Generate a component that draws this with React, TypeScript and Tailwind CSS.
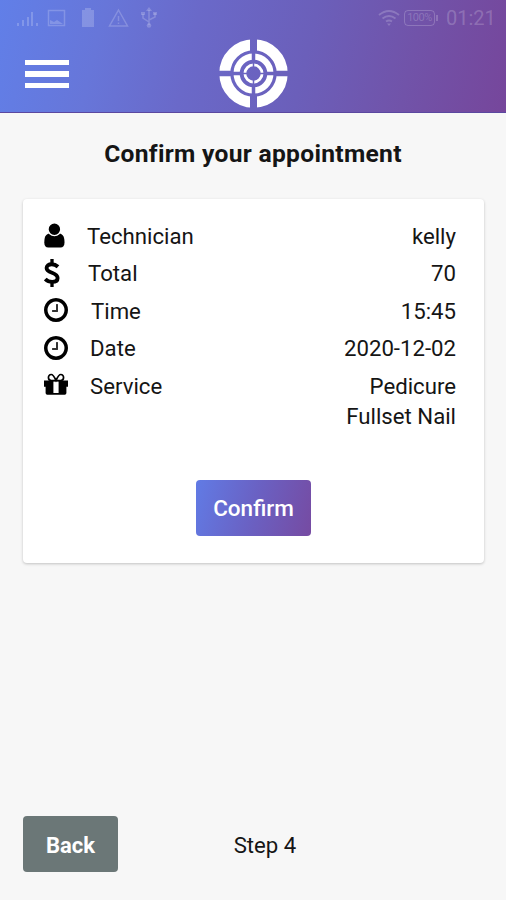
import type { ReactNode } from 'react';

function StatusBar() {
  return (
    <div className="flex h-9 items-center justify-between pr-[11px] pl-[15px] text-white/20">
      <div className="flex items-center">
        <svg width="24" height="20" viewBox="0 0 24 20" fill="currentColor">
          <path d="M2 15h2v3H2zM7 12h2v6H7zM12 9h2v9h-2zM16 4h2v14h-2zM21 15h2v3h-2z" />
        </svg>
        <svg className="ml-2" width="19" height="20" viewBox="0 0 19 20" fill="none" stroke="currentColor" strokeWidth="1.5">
          <path d="M1.5 2.5h16v15h-16z" />
          <path d="M3 16v-4l4 2 3-2 6 4z" fill="currentColor" stroke="none" />
        </svg>
        <svg className="ml-[15px]" width="14" height="20" viewBox="0 0 14 20" fill="currentColor">
          <path d="M4 0h6v2h3v17H1V2h3z" />
        </svg>
        <svg className="ml-[13px]" width="21" height="20" viewBox="0 0 21 20" fill="none" stroke="currentColor" strokeWidth="1.5">
          <path d="M10.5 2 19.5 18h-18zM10.5 8v5M10.5 14.5v1.5" />
        </svg>
        <svg className="ml-[11px]" width="18" height="22" viewBox="0 0 18 22" fill="none" stroke="currentColor" strokeWidth="1.5">
          <path d="M9 3v15M9 15l-6-4V7M9 13l6-3V6" />
          <path d="m9 0 3 4H6zM1 5h4v3H1zM13 5h4v3h-4z" fill="currentColor" stroke="none" />
          <circle cx="9" cy="18.5" r="2.3" fill="currentColor" stroke="none" />
        </svg>
      </div>
      <div className="flex items-center">
        <svg width="22" height="18" viewBox="0 0 22 18" fill="none" stroke="currentColor" strokeWidth="2">
          <path d="M1 6q10-8 20 0M4.500 9.500q6.500-5 13 0M8 12.500q3-2 6 0" />
          <path d="m9 14.500 2 2.500 2-2.500z" fill="currentColor" stroke="none" />
        </svg>
        <div className="ml-1 flex h-4 w-[31px] items-center justify-center rounded border border-white/20 text-[11px] tracking-[-0.5px]">
          100%
        </div>
        <div className="ml-[1px] h-1.5 w-[2px] bg-white/20" />
        <div className="ml-[8px] w-[49px] text-[20px] leading-none whitespace-nowrap">01:21</div>
      </div>
    </div>
  );
}

function Logo() {
  return (
    <svg width="70" height="70" viewBox="-35.5 -35.5 70 70" fill="none" stroke="white">
      <defs>
        <mask id="outer" maskUnits="userSpaceOnUse" x="-35" y="-35" width="70" height="70">
          <path d="M-35-35h70v70h-70z" fill="white" stroke="none" />
          <path d="M0-35V35" stroke="black" strokeWidth="7" />
          <path d="M-35 0H35" stroke="black" strokeWidth="5.500" />
        </mask>
        <mask id="middle" maskUnits="userSpaceOnUse" x="-35" y="-35" width="70" height="70">
          <path d="M-35-35h70v70h-70z" fill="white" stroke="none" />
          <path d="M0-35V35M-35 0H35" stroke="black" strokeWidth="3.500" />
        </mask>
        <mask id="inner" maskUnits="userSpaceOnUse" x="-35" y="-35" width="70" height="70">
          <path d="M-35-35h70v70h-70z" fill="white" stroke="none" />
          <path d="M0-35V35M-35 0H35" stroke="black" strokeWidth="1.500" />
        </mask>
      </defs>
      <circle r="28.700" strokeWidth="11" mask="url(#outer)" />
      <circle r="16.900" strokeWidth="6.200" mask="url(#middle)" />
      <circle r="8.600" strokeWidth="2.800" mask="url(#inner)" />
    </svg>
  );
}

function UserIcon() {
  return (
    <svg width="21" height="25" viewBox="0 0 21 25" fill="black">
      <path d="M5.500 10.500C1.500 11 .3 14.500.3 19.500c0 3.500 1.400 5 4 5h12.200c2.600 0 4-1.500 4-5 0-5-1.200-8.500-5.200-9z" />
      <circle cx="10.400" cy="6.200" r="6.400" stroke="white" strokeWidth="1.400" />
    </svg>
  );
}

function DollarIcon() {
  return (
    <svg width="16" height="28" viewBox="0 0 16 28" fill="none" stroke="black">
      <path d="M8 0v5M8 23v5" strokeWidth="3.300" />
      <path d="M14 7.800C12 6 10 5.200 7.700 5.200 4.500 5.200 2.600 6.700 2.600 9c0 2.700 2.500 3.700 5.400 4.800 3 1.100 5.600 2.300 5.600 5.200 0 2.500-2.100 3.900-5.400 3.900-2.700 0-5.200-1-7-2.900" strokeWidth="3.900" />
    </svg>
  );
}

function ClockIcon() {
  return (
    <svg width="24" height="24" viewBox="0 128 1536 1536" fill="black">
      <path d="M896 544v448q0 14-9 23t-23 9h-320q-14 0-23-9t-9-23v-64q0-14 9-23t23-9h224v-352q0-14 9-23t23-9h64q14 0 23 9t9 23z" fillOpacity="0.8" />
      <path d="M1312 896q0-148-73-273t-198-198-273-73-273 73-198 198-73 273 73 273 198 198 273 73 273-73 198-198 73-273zm224 0q0 209-103 385.500t-279.500 279.500-385.500 103-385.500-103-279.500-279.500-103-385.500 103-385.500 279.500-279.500 385.500-103 385.500 103 279.500 279.500 103 385.500z" />
    </svg>
  );
}

function GiftIcon() {
  return (
    <svg className="-mt-[3px]" width="24" height="22" viewBox="0 0 24 22">
      <path d="M0 7.500h24v6.300h-1.600V20q0 1.700-1.700 1.700H3.300Q1.600 21.700 1.600 20v-6.200H0z" fill="black" />
      <path d="M9.400 8.500h5.200v11.500H9.400z" fill="white" />
      <path d="M11.800 7.500H7.300C3.500 7.500 3.500 1.500 7.200 1.500c2.300 0 3.300 2.700 4.800 6 1.500-3.300 2.500-6 4.800-6 3.700 0 3.700 6-.1 6z" fill="white" stroke="black" strokeWidth="1.700" />
    </svg>
  );
}

type RowProps = { icon: ReactNode; label: string; offset: string; values: string[] };

function Row({ icon, label, offset, values }: RowProps) {
  return (
    <div className="flex items-start text-[22.200px] leading-[30.500px]">
      <div className="flex h-[29px] w-6 items-center">{icon}</div>
      <div className={offset}>{label}</div>
      <div className="ml-auto text-right">
        {values.map((value) => (
          <div key={value}>{value}</div>
        ))}
      </div>
    </div>
  );
}

export default function App() {
  return (
    <div className="flex h-[900px] w-[506px] flex-col bg-[#f7f7f7] font-['Roboto',sans-serif] text-[#151515]">
      <header className="h-[113px] border-b border-[#5b48a0] bg-[linear-gradient(103deg,#617fe8_0%,#6776d9_20%,#6a69c9_38%,#6b5fba_60%,#7153a9_80%,#76469b_100%)]">
        <StatusBar />
        <div className="grid grid-cols-[1fr_70px_1fr] items-center pt-[2px]">
          <button className="mt-[2px] ml-[25px] flex w-[44px] flex-col gap-[6px]" aria-label="Menu">
            <span className="h-[5.500px] w-full bg-white" />
            <span className="h-[5.500px] w-full bg-white" />
            <span className="h-[5.500px] w-full bg-white" />
          </button>
          <Logo />
        </div>
      </header>

      <h1 className="mt-[26px] text-center text-[24.600px] leading-[30px] font-bold tracking-[0.300px]">Confirm your appointment</h1>

      <section className="mr-[22px] ml-[23px] mt-[30px] flex h-[364px] flex-col rounded-[4px] bg-white pt-[21.700px] pr-7 pl-[21px] shadow-[0_1px_3px_rgba(0,0,0,0.22)]">
        <div className="flex flex-col gap-[7px]">
          <Row icon={<UserIcon />} label="Technician" offset="ml-[19px]" values={['kelly']} />
          <Row icon={<DollarIcon />} label="Total" offset="ml-[20px]" values={['70']} />
          <Row icon={<ClockIcon />} label="Time" offset="ml-[23px]" values={['15:45']} />
          <Row icon={<ClockIcon />} label="Date" offset="ml-[22px]" values={['2020-12-02']} />
          <Row icon={<GiftIcon />} label="Service" offset="ml-[22px]" values={['Pedicure', 'Fullset Nail']} />
        </div>
        <button className="mt-[48.300px] ml-[152px] h-[56px] w-[115px] rounded-[4px] bg-[linear-gradient(105deg,#617be5,#6a61c3_50%,#764ba2)] pt-[2px] text-[22.500px] font-medium text-white">
          Confirm
        </button>
      </section>

      <footer className="mt-auto mb-7 grid grid-cols-[95px_1fr_95px] items-center px-[23px] text-[22.200px]">
        <button className="h-[56px] rounded-[4px] bg-[#6b7777] pt-[2px] text-[22px] font-bold text-white">Back</button>
        <div className="pt-[3px] pl-[24px] text-center">Step 4</div>
      </footer>
    </div>
  );
}
